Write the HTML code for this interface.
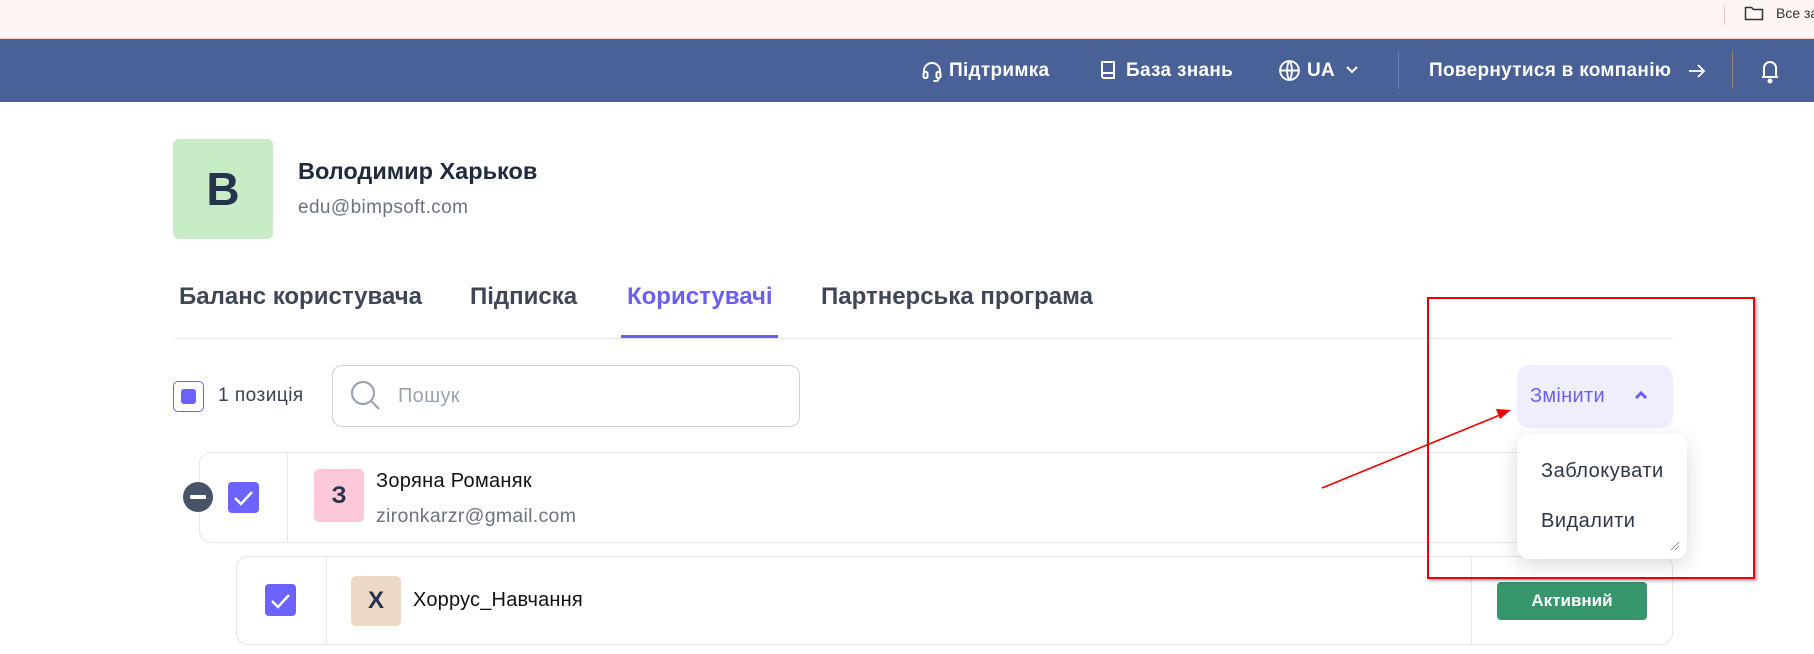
<!DOCTYPE html>
<html><head><meta charset="utf-8"><style>
*{margin:0;padding:0;box-sizing:border-box}
body{width:1814px;height:654px;overflow:hidden;background:#fff;font-family:"Liberation Sans",sans-serif;position:relative;color:#1f2937}
.a{position:absolute;white-space:nowrap}
.top{left:0;top:0;width:1814px;height:39px;background:#fff5f3;border-bottom:1px solid #f0c8bf}
.nav{left:0;top:39px;width:1814px;height:63px;background:#4a6198;color:#fff;font-size:19px;font-weight:bold;letter-spacing:.3px}
.nav .a{top:0;line-height:63px}
.cb{background:#6c63ff;border-radius:4px}
.tab{top:283px;font-size:24px;font-weight:bold;color:#3f4656}
.row{border:1px solid #e3e5e8;border-radius:12px;background:#fff}
</style></head><body>
<div class="a top">
  <div class="a" style="left:1724px;top:5px;width:1px;height:20px;background:#f0c8bf"></div>
  <svg class="a" style="left:1744px;top:5px" width="20" height="16" viewBox="0 0 20 16"><path d="M1.5 2.5h6l2 2h9v10h-17z" fill="none" stroke="#333" stroke-width="1.5"/></svg>
  <div class="a" style="left:1776px;top:5px;font-size:14px;color:#333">Все за</div>
</div>
<div class="a nav">
  <svg class="a" style="left:921px;top:21px" width="22" height="22" viewBox="0 0 22 22" fill="none" stroke="#fff" stroke-width="2"><path d="M3 14v-3a8 8 0 0 1 16 0v3"/><rect x="2.5" y="12" width="4" height="6" rx="1.5"/><rect x="15.5" y="12" width="4" height="6" rx="1.5"/><path d="M17.5 18v1a2 2 0 0 1-2 2h-3"/></svg>
  <div class="a" style="left:949px">Підтримка</div>
  <svg class="a" style="left:1097px;top:20px" width="22" height="22" viewBox="0 0 22 22" fill="none" stroke="#fff" stroke-width="2"><path d="M5 3h12v16H7a2 2 0 0 1-2-2z"/><path d="M5 16a2 2 0 0 1 2-2h10"/></svg>
  <div class="a" style="left:1126px">База знань</div>
  <svg class="a" style="left:1278px;top:20px" width="23" height="23" viewBox="0 0 22 22" fill="none" stroke="#fff" stroke-width="1.8"><circle cx="11" cy="11" r="9"/><path d="M2 11h18M11 2c3 3 3 15 0 18M11 2c-3 3-3 15 0 18"/></svg>
  <div class="a" style="left:1307px">UA</div>
  <svg class="a" style="left:1345px;top:26px" width="14" height="10" viewBox="0 0 14 10" fill="none" stroke="#fff" stroke-width="2"><path d="M2 2l5 5 5-5"/></svg>
  <div class="a" style="left:1398px;top:12px;width:1px;height:38px;background:#6b7fb0"></div>
  <div class="a" style="left:1429px">Повернутися в компанію</div>
  <svg class="a" style="left:1687px;top:22px" width="20" height="20" viewBox="0 0 20 20" fill="none" stroke="#fff" stroke-width="1.8"><path d="M2 10h15M11 4l6 6-6 6"/></svg>
  <div class="a" style="left:1732px;top:12px;width:1px;height:38px;background:#8a8a70"></div>
  <svg class="a" style="left:1760px;top:19px" width="20" height="26" viewBox="0 0 20 26" fill="none" stroke="#fff" stroke-width="2"><path d="M4 19V10a6 6 0 0 1 12 0v9zM2 19h16"/><circle cx="10" cy="23" r="1.5" fill="#fff"/></svg>
</div>

<div class="a" style="left:173px;top:139px;width:100px;height:100px;background:#c8ecc6;border-radius:6px;font-size:46px;font-weight:bold;color:#26334d;text-align:center;line-height:100px">В</div>
<div class="a" style="left:298px;top:158px;font-size:23.5px;font-weight:bold;color:#1f2a3d">Володимир Харьков</div>
<div class="a" style="left:298px;top:197px;font-size:19px;letter-spacing:.4px;color:#6b7280">edu@bimpsoft.com</div>

<div class="a tab" style="left:179px">Баланс користувача</div>
<div class="a tab" style="left:470px">Підписка</div>
<div class="a tab" style="left:627px;color:#6a5ff0">Користувачі</div>
<div class="a tab" style="left:821px">Партнерська програма</div>
<div class="a" style="left:173px;top:338px;width:1500px;height:1px;background:#e5e7eb"></div>
<div class="a" style="left:621px;top:335px;width:157px;height:3px;background:#6a5ff0"></div>

<div class="a" style="left:173px;top:381px;width:31px;height:31px;border:1.5px solid #6c63ff;border-radius:5px"></div>
<div class="a cb" style="left:181px;top:389px;width:15px;height:15px;border-radius:3px"></div>
<div class="a" style="left:218px;top:385px;font-size:19px;letter-spacing:.5px;color:#374151">1 позиція</div>
<div class="a" style="left:332px;top:365px;width:468px;height:62px;border:1px solid #cfd3d9;border-radius:10px"></div>
<svg class="a" style="left:349px;top:379px" width="34" height="34" viewBox="0 0 34 34" fill="none" stroke="#9ca3af" stroke-width="2.2"><circle cx="14" cy="14" r="11"/><path d="M22 22l8 8"/></svg>
<div class="a" style="left:398px;top:385px;font-size:20px;letter-spacing:.3px;color:#9ca3af">Пошук</div>

<div class="a" style="left:1517px;top:365px;width:156px;height:63px;background:#efeefd;border-radius:12px"></div>
<div class="a" style="left:1530px;top:385px;font-size:20px;letter-spacing:.3px;color:#6a5ff0">Змінити</div>
<svg class="a" style="left:1634px;top:390px" width="14" height="10" viewBox="0 0 14 10" fill="none" stroke="#6a5ff0" stroke-width="3"><path d="M2 8l5-5 5 5"/></svg>

<div class="a row" style="left:199px;top:452px;width:1474px;height:91px"></div>
<div class="a" style="left:287px;top:452px;width:1px;height:91px;background:#e3e5e8"></div>
<div class="a" style="left:183px;top:482px;width:30px;height:30px;border-radius:50%;background:#475467"></div>
<div class="a" style="left:190px;top:495px;width:16px;height:4px;background:#fff;border-radius:1px"></div>
<div class="a cb" style="left:228px;top:482px;width:31px;height:31px"></div>
<svg class="a" style="left:228px;top:482px" width="31" height="31" viewBox="0 0 31 31" fill="none" stroke="#fff" stroke-width="2.5"><path d="M7 16l6 6 11-12"/></svg>
<div class="a" style="left:314px;top:469px;width:50px;height:53px;background:#fdc9d8;border-radius:5px;font-size:24px;font-weight:bold;color:#26334d;text-align:center;line-height:53px">З</div>
<div class="a" style="left:376px;top:470px;font-size:20px;letter-spacing:.3px;color:#111">Зоряна Романяк</div>
<div class="a" style="left:376px;top:505px;font-size:19.5px;letter-spacing:.3px;color:#6b7280">zironkarzr@gmail.com</div>

<div class="a row" style="left:236px;top:556px;width:1437px;height:89px"></div>
<div class="a" style="left:326px;top:556px;width:1px;height:89px;background:#e3e5e8"></div>
<div class="a" style="left:1471px;top:556px;width:1px;height:89px;background:#e3e5e8"></div>
<div class="a cb" style="left:265px;top:584px;width:31px;height:32px"></div>
<svg class="a" style="left:265px;top:584px" width="31" height="32" viewBox="0 0 31 32" fill="none" stroke="#fff" stroke-width="2.5"><path d="M7 17l6 6 11-12"/></svg>
<div class="a" style="left:351px;top:576px;width:50px;height:50px;background:#edd8c4;border-radius:5px;font-size:24px;font-weight:bold;color:#26334d;text-align:center;line-height:50px">Х</div>
<div class="a" style="left:413px;top:589px;font-size:20px;letter-spacing:.2px;color:#111">Хоррус_Навчання</div>
<div class="a" style="left:1497px;top:582px;width:150px;height:38px;background:#36956a;border-radius:4px;color:#fff;font-size:17px;font-weight:bold;text-align:center;line-height:38px">Активний</div>

<div class="a" style="left:1517px;top:434px;width:170px;height:125px;background:#fff;border-radius:12px;box-shadow:0 6px 20px rgba(0,0,0,.15)"></div>
<div class="a" style="left:1541px;top:460px;font-size:20px;letter-spacing:.5px;color:#2d3748">Заблокувати</div>
<div class="a" style="left:1541px;top:510px;font-size:20px;letter-spacing:.5px;color:#2d3748">Видалити</div>
<svg class="a" style="left:1670px;top:541px" width="10" height="10" viewBox="0 0 10 10" stroke="#999"><path d="M1 9l8-8M5 9l4-4"/></svg>

<div class="a" style="left:1427px;top:297px;width:328px;height:282px;border:2px solid #e00;box-shadow:2px 2px 3px rgba(0,0,0,.3)"></div>
<svg class="a" style="left:0;top:0" width="1814" height="654"><line x1="1322" y1="488" x2="1500" y2="415" stroke="#e00" stroke-width="1.6"/><path d="M1511 410l-15 -1 4 10z" fill="#e00"/></svg>
</body></html>
